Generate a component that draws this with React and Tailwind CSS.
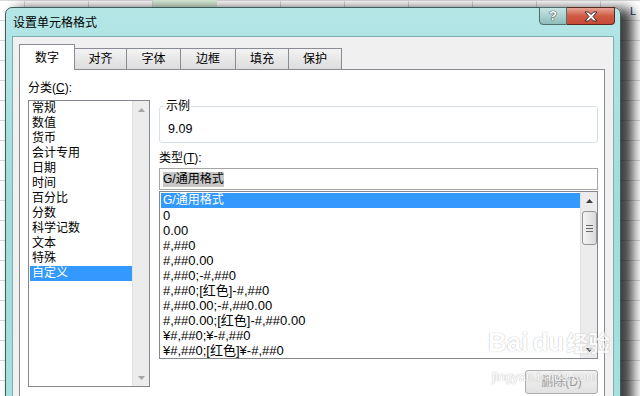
import React from 'react';

const categories = ['常规', '数值', '货币', '会计专用', '日期', '时间', '百分比', '分数', '科学记数', '文本', '特殊', '自定义'];
const formats = [
  'G/通用格式',
  '0',
  '0.00',
  '#,##0',
  '#,##0.00',
  '#,##0;-#,##0',
  '#,##0;[红色]-#,##0',
  '#,##0.00;-#,##0.00',
  '#,##0.00;[红色]-#,##0.00',
  '¥#,##0;¥-#,##0',
  '¥#,##0;[红色]¥-#,##0',
];
const tabs = [
  { label: '数字', w: 'w-[56px]' },
  { label: '对齐', w: 'w-[53px]' },
  { label: '字体', w: 'w-[55px]' },
  { label: '边框', w: 'w-[56px]' },
  { label: '填充', w: 'w-[54px]' },
  { label: '保护', w: 'w-[54px]' },
];

function Arrow({ up, color }) {
  return (
    <svg width="7" height="4" viewBox="0 0 7 4">
      {up ? <path d="M0 4 L3.5 0 L7 4 Z" fill={color} /> : <path d="M0 0 L7 0 L3.5 4 Z" fill={color} />}
    </svg>
  );
}

function Scrollbar({ thumb }) {
  return (
    <div className="w-[17px] h-full bg-[#ececec] border-l border-[#e2e2e2] flex flex-col items-center">
      <div className="h-[17px] w-full flex items-center justify-center">
        <Arrow up color={thumb ? '#404040' : '#a3a3a3'} />
      </div>
      {thumb && (
        <div className="mt-[2px] w-[15px] h-[34px] rounded-[3px] border border-[#959595] bg-gradient-to-r from-[#f4f4f4] to-[#d9d9d9] flex flex-col items-center justify-center gap-[2px]">
          <div className="w-[7px] h-px bg-[#6a6a6a]" />
          <div className="w-[7px] h-px bg-[#6a6a6a]" />
          <div className="w-[7px] h-px bg-[#6a6a6a]" />
        </div>
      )}
      <div className="flex-1" />
      <div className="h-[17px] w-full flex items-center justify-center">
        <Arrow color={thumb ? '#404040' : '#a3a3a3'} />
      </div>
    </div>
  );
}

export default function App() {
  return (
    <div className="relative w-[640px] h-[396px] overflow-hidden bg-white bg-[linear-gradient(#d9d9d9_1px,transparent_1px),linear-gradient(90deg,#d9d9d9_1px,transparent_1px)] bg-[length:64px_20px] bg-[position:24px_0px] font-['Liberation_Sans','Noto_Sans_CJK_SC',sans-serif] text-[12px] text-black">
      <div className="absolute left-[153px] top-0 w-[64px] h-[8px] bg-[#dcefdc]" />
      <div className="absolute left-[630px] top-[5px] text-[11px] leading-[12px] text-[#1f3a6a]">L</div>

      {/* dialog window */}
      <div className="absolute left-[5px] top-[7px] w-[616px] h-[400px] rounded-t-[7px] border border-[#3f5c5c] bg-gradient-to-b from-[#b4e6e6] via-[#9fdcdc] to-[#a6e0e0] shadow-[10px_3px_12px_2px_rgba(0,0,0,0.75)]">
        <div className="h-[28px] flex items-center pl-[7px] pt-[2px] text-[12px] text-black">设置单元格格式</div>

        <div className="absolute -top-px right-[5px] flex h-[18px]">
          <div className="w-[28px] h-full rounded-bl-[4px] border border-[#4f6e6e] bg-gradient-to-b from-[#c6e6e6] to-[#8fbcbc] flex items-center justify-center text-[13px] font-bold text-white [text-shadow:0_0_1px_#222,0_0_1px_#222]">?</div>
          <div className="w-[48px] h-full rounded-br-[4px] border border-l-0 border-[#5a2a22] bg-gradient-to-b from-[#e6a494] via-[#cf5a44] to-[#c84a36] flex items-center justify-center">
            <svg width="14" height="11" viewBox="0 0 14 11">
              <path d="M1 1 H4.5 L7 3.6 L9.5 1 H13 L9 5.5 L13 10 H9.5 L7 7.4 L4.5 10 H1 L5 5.5 Z" fill="#ffffff" stroke="#3a2a28" strokeWidth="1" strokeLinejoin="round" />
            </svg>
          </div>
        </div>

        {/* client area */}
        <div className="mx-[6px] h-[380px] border border-[#7fb0b0] bg-[#f0f0f0] pl-[6px] pr-[8px] pt-[7px]">
          <div className="flex items-end h-[25px]">
            {tabs.map((t, i) =>
              i === 0 ? (
                <div key={t.label} className={`relative z-10 -mb-px h-[26px] ${t.w} border border-b-0 border-[#898c95] bg-white flex items-center justify-center`}>
                  {t.label}
                </div>
              ) : (
                <div key={t.label} className={`-ml-px h-[21px] ${t.w} border border-b-0 border-[#898c95] bg-gradient-to-b from-[#f3f3f3] to-[#dcdcdc] flex items-center justify-center`}>
                  {t.label}
                </div>
              )
            )}
          </div>

          <div className="h-[340px] border border-[#898c95] bg-white pl-[8px] pt-[10px] flex">
            {/* category column */}
            <div className="w-[122px] flex flex-col">
              <div className="leading-[16px]">分类(<span className="underline">C</span>):</div>
              <div className="mt-[4px] h-[287px] border border-[#828790] flex">
                <div className="flex-1 pl-px">
                  {categories.map((c, i) => (
                    <div key={c} className={`h-[15px] leading-[15px] pl-[2px] ${i === categories.length - 1 ? 'bg-[#3399ff] text-white' : ''}`}>
                      {c}
                    </div>
                  ))}
                </div>
                <Scrollbar />
              </div>
            </div>

            {/* type column */}
            <div className="ml-[9px] w-[439px] flex flex-col">
              <div className="relative mt-[26px] h-[37px] rounded-[3px] border border-[#d5dfe5] pl-[8px] pt-[14px] leading-[16px] text-[12.5px]">
                <div className="absolute left-[5px] -top-[9px] px-px bg-white leading-[16px] text-[12px]">示例</div>
                9.09
              </div>
              <div className="mt-[7px] leading-[16px]">类型(<span className="underline">T</span>):</div>
              <div className="mt-[2px] h-[22px] border border-[#a5a5a5] flex items-center pl-[3px]">
                <span className="bg-[#c6c6c6] leading-[15px]">G/通用格式</span>
              </div>
              <div className="mt-px h-[168px] border border-[#828790] flex">
                <div className="flex-1 pl-px pt-px text-[13px]">
                  {formats.map((f, i) => (
                    <div key={f} className={`h-[15px] leading-[15px] pl-[2px] ${i === 0 ? 'bg-[#3399ff] text-white text-[12px]' : ''}`}>
                      {f}
                    </div>
                  ))}
                </div>
                <Scrollbar thumb />
              </div>
              <div className="self-end mt-[11px] w-[73px] h-[24px] rounded-[3px] border border-[#adadad] bg-gradient-to-b from-[#f2f2f2] to-[#e2e2e2] flex items-center justify-center text-[#9a9a9a]">
                删除(D)
              </div>
            </div>
          </div>
        </div>
      </div>

      {/* watermark */}
      <div className="absolute left-[488px] top-[328px] text-[26px] font-bold leading-[28px] text-white opacity-70 [text-shadow:0_0_1px_#aaa,0_0_1px_#aaa]">
        Bai<span className="ml-[4px]">du</span><span className="ml-[2px] text-[22px]">经验</span>
      </div>
      <div className="absolute left-[492px] top-[370px] text-[13px] leading-[14px] text-white opacity-70 [text-shadow:0_0_1px_#aaa,0_0_1px_#aaa]">
        jingyan.baidu.com
      </div>
    </div>
  );
}
